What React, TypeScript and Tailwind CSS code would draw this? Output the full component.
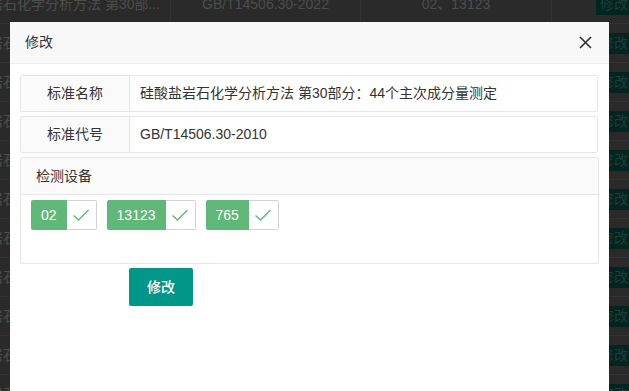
import React from "react";

const font = { fontFamily: '"Liberation Sans", "Noto Sans CJK SC", sans-serif' };

function BgRow({ first }: { first?: boolean }) {
  return (
    <div className="flex h-[39px] items-center border-b border-[#333333] bg-[#2a2a2a] text-[14px] text-[#4d4d4d]">
      <div className="w-[227px] shrink-0 pl-[4px] whitespace-nowrap overflow-hidden">硅酸盐岩石化学分析方法 第30部...</div>
      <div className="w-[190px] shrink-0 self-stretch flex items-center justify-center border-l border-[#333333]">{first ? "GB/T14506.30-2022" : "GB/T14506.30-2022"}</div>
      <div className="w-[191px] shrink-0 self-stretch flex items-center justify-center border-l border-[#333333]">02、13123</div>
      <div className="flex-1 self-stretch flex items-center border-l border-[#333333] pl-[44px]">
        <div className="h-[21px] w-[40px] bg-[#03241f] text-[#1b3f38] text-[14px] leading-[21px] pl-[4px] whitespace-nowrap">修改</div>
      </div>
    </div>
  );
}

function Check() {
  return (
    <div className="w-[30px] h-[30px] border border-l-0 border-[#d2d2d2] flex items-center justify-center rounded-r-[2px] bg-white">
      <svg width="18" height="14" viewBox="0 0 18 14" fill="none">
        <path d="M1.5 7.5 L6.5 12 L16.5 2" stroke="#5FB878" strokeWidth="1.4" />
      </svg>
    </div>
  );
}

function Tag({ label }: { label: string }) {
  return (
    <div className="flex h-[30px]">
      <div className="h-[30px] px-[10px] bg-[#5FB878] text-white text-[14px] leading-[30px] rounded-l-[2px]">{label}</div>
      <Check />
    </div>
  );
}

export default function App() {
  return (
    <div className="relative w-[629px] h-[391px] overflow-hidden bg-[#2a2a2a]" style={font}>
      <div className="ml-[-57px] mt-[-15px] w-[700px]">
        {Array.from({ length: 11 }).map((_, i) => (
          <BgRow key={i} first={i === 0} />
        ))}
      </div>

      <div className="absolute left-[10px] top-[22px] w-[599px] h-[400px] bg-white">
        <div className="h-[42px] bg-[#F8F8F8] border-b border-[#eeeeee] flex items-center justify-between pl-[15px] pr-[17px]">
          <span className="text-[14px] text-[#333333]">修改</span>
          <svg width="13" height="13" viewBox="0 0 13 13">
            <path d="M1 1 L12 12 M12 1 L1 12" stroke="#2f2f2f" strokeWidth="1.6" />
          </svg>
        </div>

        <div className="pt-[11px] pl-[10px] pr-[11px] flex flex-col gap-[4px]">
          <div className="flex h-[37px] border border-[#e6e6e6] rounded-[2px]">
            <div className="w-[109px] shrink-0 bg-[#FAFAFA] border-r border-[#e6e6e6] flex items-center justify-center text-[14px] text-[#333333]">标准名称</div>
            <div className="flex items-center pl-[10px] text-[14px] text-[#333333]">硅酸盐岩石化学分析方法 第30部分：44个主次成分量测定</div>
          </div>
          <div className="flex h-[37px] border border-[#e6e6e6] rounded-[2px]">
            <div className="w-[109px] shrink-0 bg-[#FAFAFA] border-r border-[#e6e6e6] flex items-center justify-center text-[14px] text-[#333333]">标准代号</div>
            <div className="flex items-center pl-[10px] text-[14px] text-[#333333]">GB/T14506.30-2010</div>
          </div>
          <div className="border border-[#e6e6e6] rounded-[2px] mr-[-1px]">
            <div className="h-[37px] bg-[#FAFAFA] border-b border-[#e6e6e6] flex items-center pl-[15px] text-[14px] text-[#333333]">检测设备</div>
            <div className="h-[68px] flex items-start gap-[10px] pl-[10px] pt-[5px]">
              <Tag label="02" />
              <Tag label="13123" />
              <Tag label="765" />
            </div>
          </div>
        </div>

        <div className="pl-[119px] pt-[4px]">
          <button className="h-[38px] w-[64px] bg-[#009688] text-white text-[14px] rounded-[2px] font-medium">修改</button>
        </div>
      </div>
    </div>
  );
}
